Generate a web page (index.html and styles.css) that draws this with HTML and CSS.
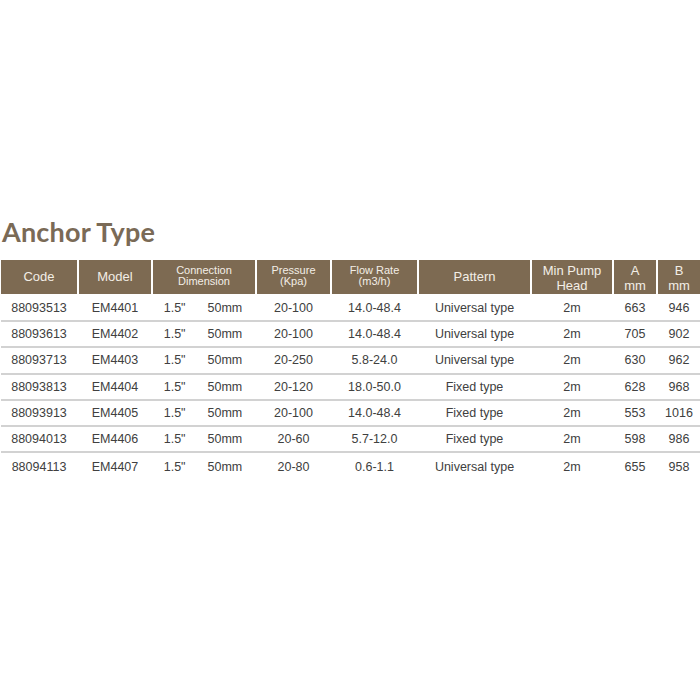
FILE: index.html
```html
<!DOCTYPE html>
<html>
<head>
<meta charset="utf-8">
<link rel="stylesheet" href="styles.css">
</head>
<body>
<div class="page">
  <h1 class="title">Anchor Type</h1>
  <div class="table">
    <div class="row head">
      <div class="cell">Code</div>
      <div class="cell">Model</div>
      <div class="cell small">Connection<br>Dimension</div>
      <div class="cell small">Pressure<br>(Kpa)</div>
      <div class="cell small">Flow Rate<br>(m3/h)</div>
      <div class="cell">Pattern</div>
      <div class="cell two">Min Pump<br>Head</div>
      <div class="cell two">A<br>mm</div>
      <div class="cell two">B<br>mm</div>
    </div>
    <div class="row body first">
      <div class="cell">88093513</div><div class="cell">EM4401</div>
      <div class="cell conn"><span>1.5"</span><span>50mm</span></div>
      <div class="cell">20-100</div><div class="cell">14.0-48.4</div><div class="cell">Universal type</div>
      <div class="cell">2m</div><div class="cell">663</div><div class="cell">946</div>
    </div>
    <div class="row body">
      <div class="cell">88093613</div><div class="cell">EM4402</div>
      <div class="cell conn"><span>1.5"</span><span>50mm</span></div>
      <div class="cell">20-100</div><div class="cell">14.0-48.4</div><div class="cell">Universal type</div>
      <div class="cell">2m</div><div class="cell">705</div><div class="cell">902</div>
    </div>
    <div class="row body">
      <div class="cell">88093713</div><div class="cell">EM4403</div>
      <div class="cell conn"><span>1.5"</span><span>50mm</span></div>
      <div class="cell">20-250</div><div class="cell">5.8-24.0</div><div class="cell">Universal type</div>
      <div class="cell">2m</div><div class="cell">630</div><div class="cell">962</div>
    </div>
    <div class="row body">
      <div class="cell">88093813</div><div class="cell">EM4404</div>
      <div class="cell conn"><span>1.5"</span><span>50mm</span></div>
      <div class="cell">20-120</div><div class="cell">18.0-50.0</div><div class="cell">Fixed type</div>
      <div class="cell">2m</div><div class="cell">628</div><div class="cell">968</div>
    </div>
    <div class="row body">
      <div class="cell">88093913</div><div class="cell">EM4405</div>
      <div class="cell conn"><span>1.5"</span><span>50mm</span></div>
      <div class="cell">20-100</div><div class="cell">14.0-48.4</div><div class="cell">Fixed type</div>
      <div class="cell">2m</div><div class="cell">553</div><div class="cell">1016</div>
    </div>
    <div class="row body">
      <div class="cell">88094013</div><div class="cell">EM4406</div>
      <div class="cell conn"><span>1.5"</span><span>50mm</span></div>
      <div class="cell">20-60</div><div class="cell">5.7-12.0</div><div class="cell">Fixed type</div>
      <div class="cell">2m</div><div class="cell">598</div><div class="cell">986</div>
    </div>
    <div class="row body last">
      <div class="cell">88094113</div><div class="cell">EM4407</div>
      <div class="cell conn"><span>1.5"</span><span>50mm</span></div>
      <div class="cell">20-80</div><div class="cell">0.6-1.1</div><div class="cell">Universal type</div>
      <div class="cell">2m</div><div class="cell">655</div><div class="cell">958</div>
    </div>
  </div>
</div>
</body>
</html>
```
FILE: styles.css
```css
html, body {
  margin: 0;
  padding: 0;
  background: #ffffff;
}
.page {
  width: 700px;
  height: 700px;
  padding-top: 214px;
  box-sizing: border-box;
  font-family: "Liberation Sans", Arial, sans-serif;
}
.title {
  margin: 0 0 0 2px;
  font-family: Lato, "Liberation Sans", sans-serif;
  font-weight: 700;
  font-size: 27px;
  line-height: 36px;
  color: #7a6a56;
  letter-spacing: 0.2px;
  height: 46px;
}
.table {
  margin-left: 1px;
  width: 699px;
}
.row {
  display: grid;
  grid-template-columns: 76px 72px 102px 73px 85px 111px 80px 42px 42px;
  column-gap: 2px;
}
.head .cell {
  background: #7d6a52;
  color: #f3eee6;
  height: 34px;
  font-size: 13px;
  line-height: 14px;
  display: flex;
  align-items: center;
  justify-content: center;
  text-align: center;
}
.head .cell.small {
  font-size: 11px;
  line-height: 11px;
  padding-bottom: 2px;
  box-sizing: border-box;
}
.head .cell.two {
  line-height: 15px;
  padding-top: 1px;
  box-sizing: border-box;
}
.body {
  height: 26.3px;
  border-bottom: 2px solid #d2d2d2;
  box-sizing: border-box;
  align-items: center;
}
.body.first {
  height: 28px;
  padding-top: 2px;
}
.body.last {
  border-bottom: none;
}
.body .cell {
  font-size: 12.5px;
  color: #404040;
  text-align: center;
  line-height: 24px;
}
.body .cell.conn {
  display: flex;
  justify-content: center;
  gap: 22px;
  padding-right: 2px;
}
```
